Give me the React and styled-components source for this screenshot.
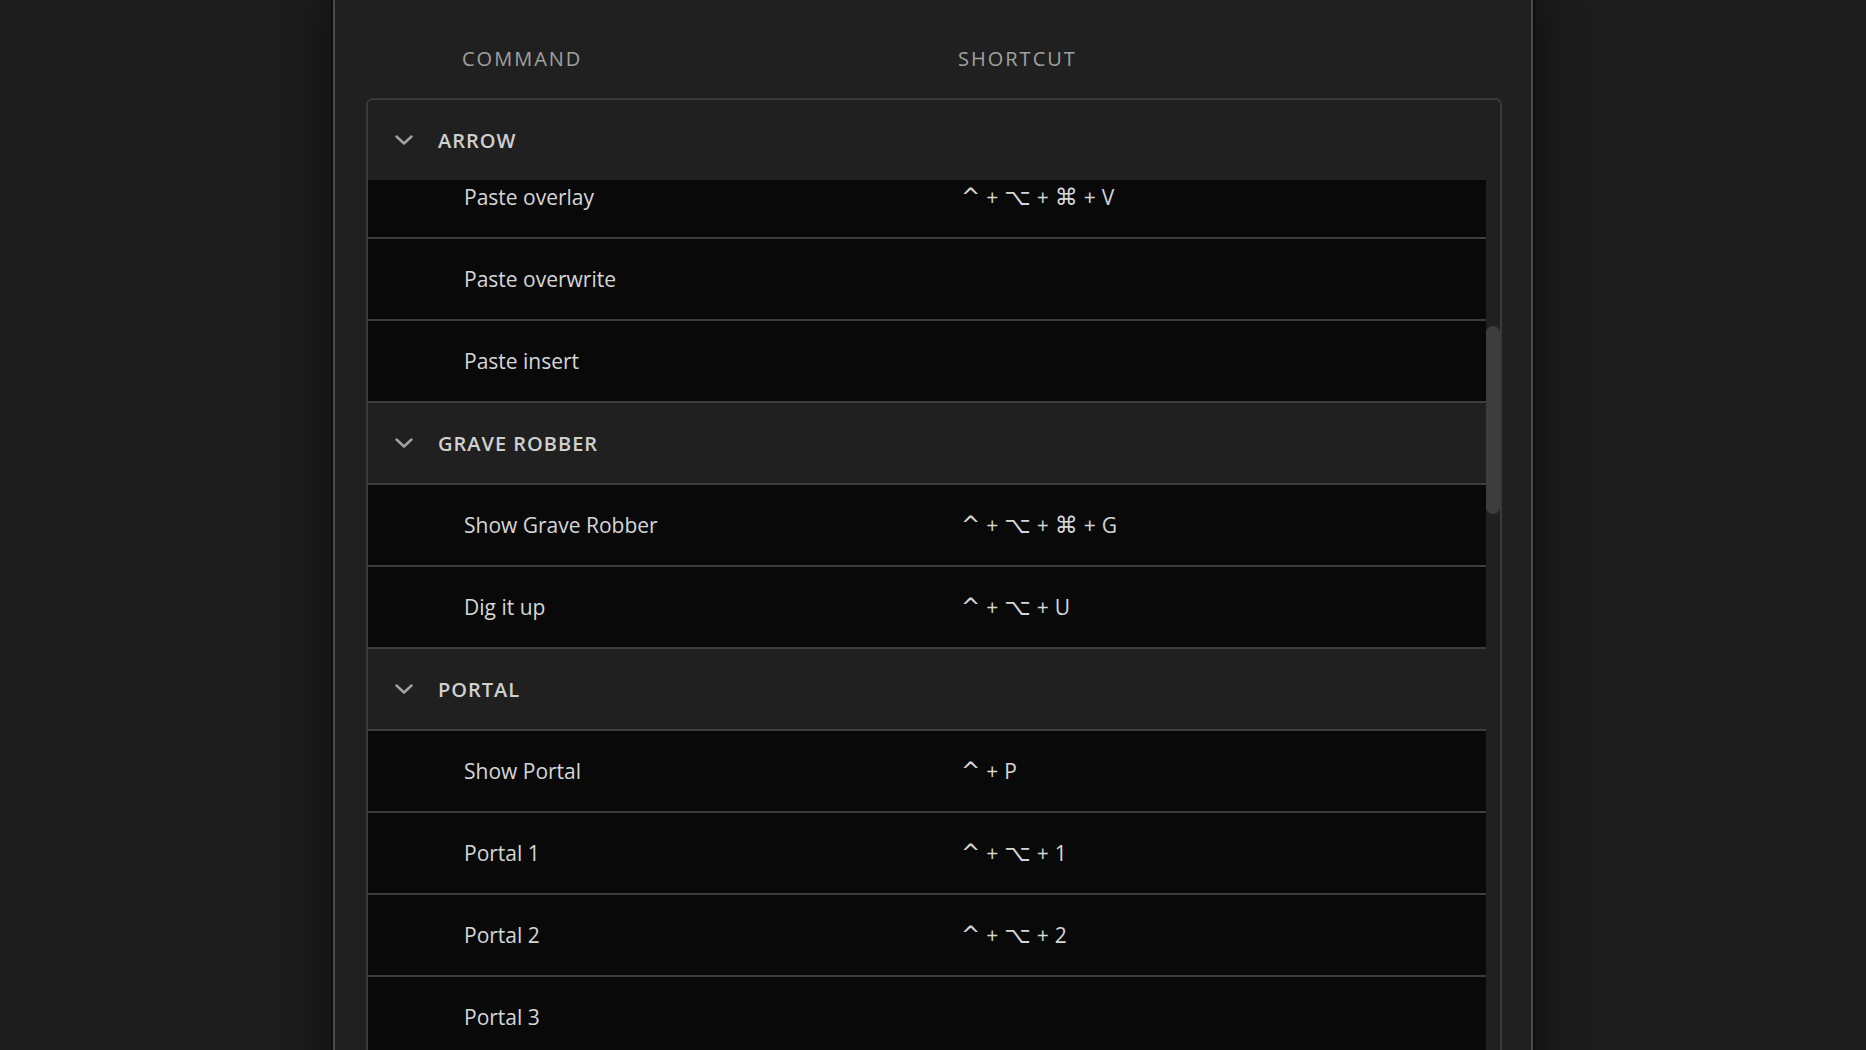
import React, { useLayoutEffect, useRef, useState } from 'react';
import styled, { createGlobalStyle } from 'styled-components';

const GlobalStyle = createGlobalStyle`
  html, body {
    margin: 0;
    padding: 0;
    height: 100%;
    overflow: hidden;
    background: #1c1c1c;
  }
  body {
    font-family: "Open Sans", "DejaVu Sans", sans-serif;
  }
`;

const Page = styled.div`
  display: flex;
  justify-content: center;
  height: 100vh;
`;

const Panel = styled.div`
  width: 1200px;
  box-sizing: border-box;
  flex-shrink: 0;
  height: 1200px;
  padding: 0 29px 0 31px;
  background: #202020;
  border-left: 2px solid #4a4a4a;
  border-right: 2px solid #4a4a4a;
  box-shadow: 0 0 0 2px #0e0e0e, 0 0 40px 6px rgba(0, 0, 0, 0.45);
`;

const ColumnHeader = styled.div`
  display: grid;
  grid-template-columns: 496px 1fr;
  padding: 38px 0 0 96px;
  height: 40px;
  margin-bottom: 20px;
  align-items: center;
  color: #a0a0a0;
  font-size: 20px;
  font-weight: 500;
  letter-spacing: 2px;
  text-transform: uppercase;
`;

const List = styled.div`
  display: flex;
  height: 977px;
  overflow: hidden;
  background: #202020;
  border: 2px solid #3a3a3a;
  border-radius: 7px;
`;

const Scroller = styled.div`
  flex: 1;
  overflow-y: scroll;
  scrollbar-width: none;

  &::-webkit-scrollbar {
    display: none;
  }
`;

const Track = styled.div`
  width: 14px;
  flex-shrink: 0;
  background: #202020;
`;

const Thumb = styled.div`
  width: 14px;
  border-radius: 7px;
  background: #3d3d3d;
`;

const Section = styled.section``;

const GroupHeader = styled.div`
  position: sticky;
  top: -2px;
  z-index: 1;
  display: flex;
  align-items: center;
  height: 80px;
  padding-left: 27px;
  background: #202020;
  border-top: 2px solid #3d3d3d;
  color: #d0d0d0;
  font-size: 20px;
  font-weight: 600;
  letter-spacing: 1px;
  text-transform: uppercase;
`;

const Chevron = styled.svg`
  width: 18px;
  height: 10px;
  margin-right: 25px;
  flex-shrink: 0;
`;

const Row = styled.div`
  display: grid;
  grid-template-columns: 497px 1fr;
  align-items: center;
  height: 80px;
  padding-left: 96px;
  background: #090909;
  border-top: 2px solid #3d3d3d;
  color: #d6d6d6;
  font-size: 21px;
`;

const Keys = styled.span`
  display: inline-flex;
  align-items: center;
  gap: 6px;
  height: 30px;
`;

const Key = styled.span`
  font-family: ${(p) => (p.$symbol ? '"DejaVu Sans", sans-serif' : '"Open Sans", "DejaVu Sans", sans-serif')};
  font-size: ${(p) => (p.$symbol ? '23px' : '21px')};
  line-height: 30px;
`;

const Plus = styled.span`
  font-size: 21px;
  line-height: 30px;
`;

const SYMBOLS = ['^', '⌥', '⌘', '⇧', '⌫', '←', '→'];

const groups = [
  {
    name: 'Clip',
    items: [
      ['New clip', '^ + N'],
      ['Duplicate clip', '^ + D'],
      ['Split clip', '^ + ⌥ + S'],
      ['Merge clips', '^ + M'],
      ['Rename clip', ''],
      ['Clip properties', '^ + ⌘ + I'],
      ['Delete clip', '^ + ⌫'],
    ],
  },
  {
    name: 'Arrow',
    items: [
      ['Select', 'V'],
      ['Cut', '^ + X'],
      ['Copy', '^ + C'],
      ['Paste', '^ + V'],
      ['Paste in place', '^ + ⌥ + V'],
      ['Paste attributes', ''],
      ['Paste overlay', '^ + ⌥ + ⌘ + V'],
      ['Paste overwrite', ''],
      ['Paste insert', ''],
    ],
  },
  {
    name: 'Grave Robber',
    items: [
      ['Show Grave Robber', '^ + ⌥ + ⌘ + G'],
      ['Dig it up', '^ + ⌥ + U'],
    ],
  },
  {
    name: 'Portal',
    items: [
      ['Show Portal', '^ + P'],
      ['Portal 1', '^ + ⌥ + 1'],
      ['Portal 2', '^ + ⌥ + 2'],
      ['Portal 3', ''],
      ['Portal 4', ''],
      ['Portal 5', ''],
      ['Portal 6', ''],
      ['Portal 7', ''],
      ['Portal 8', ''],
      ['Portal 9', ''],
    ],
  },
  {
    name: 'Markers',
    items: [
      ['Add marker', 'M'],
      ['Next marker', '⇧ + M'],
      ['Previous marker', '^ + ⇧ + M'],
      ['Clear marker', ''],
      ['Clear all markers', '^ + ⌥ + M'],
      ['Edit marker', ''],
      ['Marker color', ''],
      ['Go to marker', ''],
      ['Export markers', ''],
    ],
  },
  {
    name: 'Playback',
    items: [
      ['Play', 'Space'],
      ['Stop', 'K'],
      ['Play backward', 'J'],
      ['Play forward', 'L'],
      ['Loop', '^ + L'],
      ['Step back', '←'],
      ['Step forward', '→'],
      ['Go to start', 'Home'],
      ['Go to end', 'End'],
    ],
  },
  {
    name: 'View',
    items: [
      ['Zoom in', '='],
      ['Zoom out', '-'],
      ['Zoom to fit', '⇧ + Z'],
      ['Full screen', '^ + ⌘ + F'],
      ['Show rulers', ''],
      ['Show guides', ''],
      ['Snap', 'S'],
      ['Show waveform', ''],
      ['Reset view', ''],
    ],
  },
];

function ChevronDown() {
  return (
    <Chevron viewBox="0 0 18 10" fill="none">
      <polyline
        points="1.5,1.5 9,8.5 16.5,1.5"
        stroke="#a3a3a3"
        strokeWidth="2.4"
        strokeLinecap="round"
        strokeLinejoin="round"
      />
    </Chevron>
  );
}

function Shortcut({ keys }) {
  if (!keys) return <span />;
  const parts = keys.split(' + ');
  return (
    <Keys>
      {parts.map((k, i) => (
        <React.Fragment key={i}>
          {i > 0 && <Plus>+</Plus>}
          <Key $symbol={SYMBOLS.includes(k)}>{k}</Key>
        </React.Fragment>
      ))}
    </Keys>
  );
}

export default function App() {
  const scrollerRef = useRef(null);
  const [thumb, setThumb] = useState({ top: 0, height: 0 });

  const measure = () => {
    const el = scrollerRef.current;
    if (!el) return;
    const track = el.clientHeight;
    const height = (track * el.clientHeight) / el.scrollHeight;
    const max = el.scrollHeight - el.clientHeight;
    const top = max > 0 ? ((track - height) * el.scrollTop) / max : 0;
    setThumb({ top, height });
  };

  useLayoutEffect(() => {
    if (scrollerRef.current) scrollerRef.current.scrollTop = 1175;
    measure();
  }, []);

  return (
    <>
      <GlobalStyle />
      <Page>
        <Panel>
          <ColumnHeader>
            <span>Command</span>
            <span>Shortcut</span>
          </ColumnHeader>
          <List>
            <Scroller ref={scrollerRef} onScroll={measure}>
              {groups.map((group) => (
                <Section key={group.name}>
                  <GroupHeader>
                    <ChevronDown />
                    {group.name}
                  </GroupHeader>
                  {group.items.map(([command, keys]) => (
                    <Row key={command}>
                      <span>{command}</span>
                      <Shortcut keys={keys} />
                    </Row>
                  ))}
                </Section>
              ))}
            </Scroller>
            <Track>
              <Thumb style={{ marginTop: thumb.top, height: thumb.height }} />
            </Track>
          </List>
        </Panel>
      </Page>
    </>
  );
}
